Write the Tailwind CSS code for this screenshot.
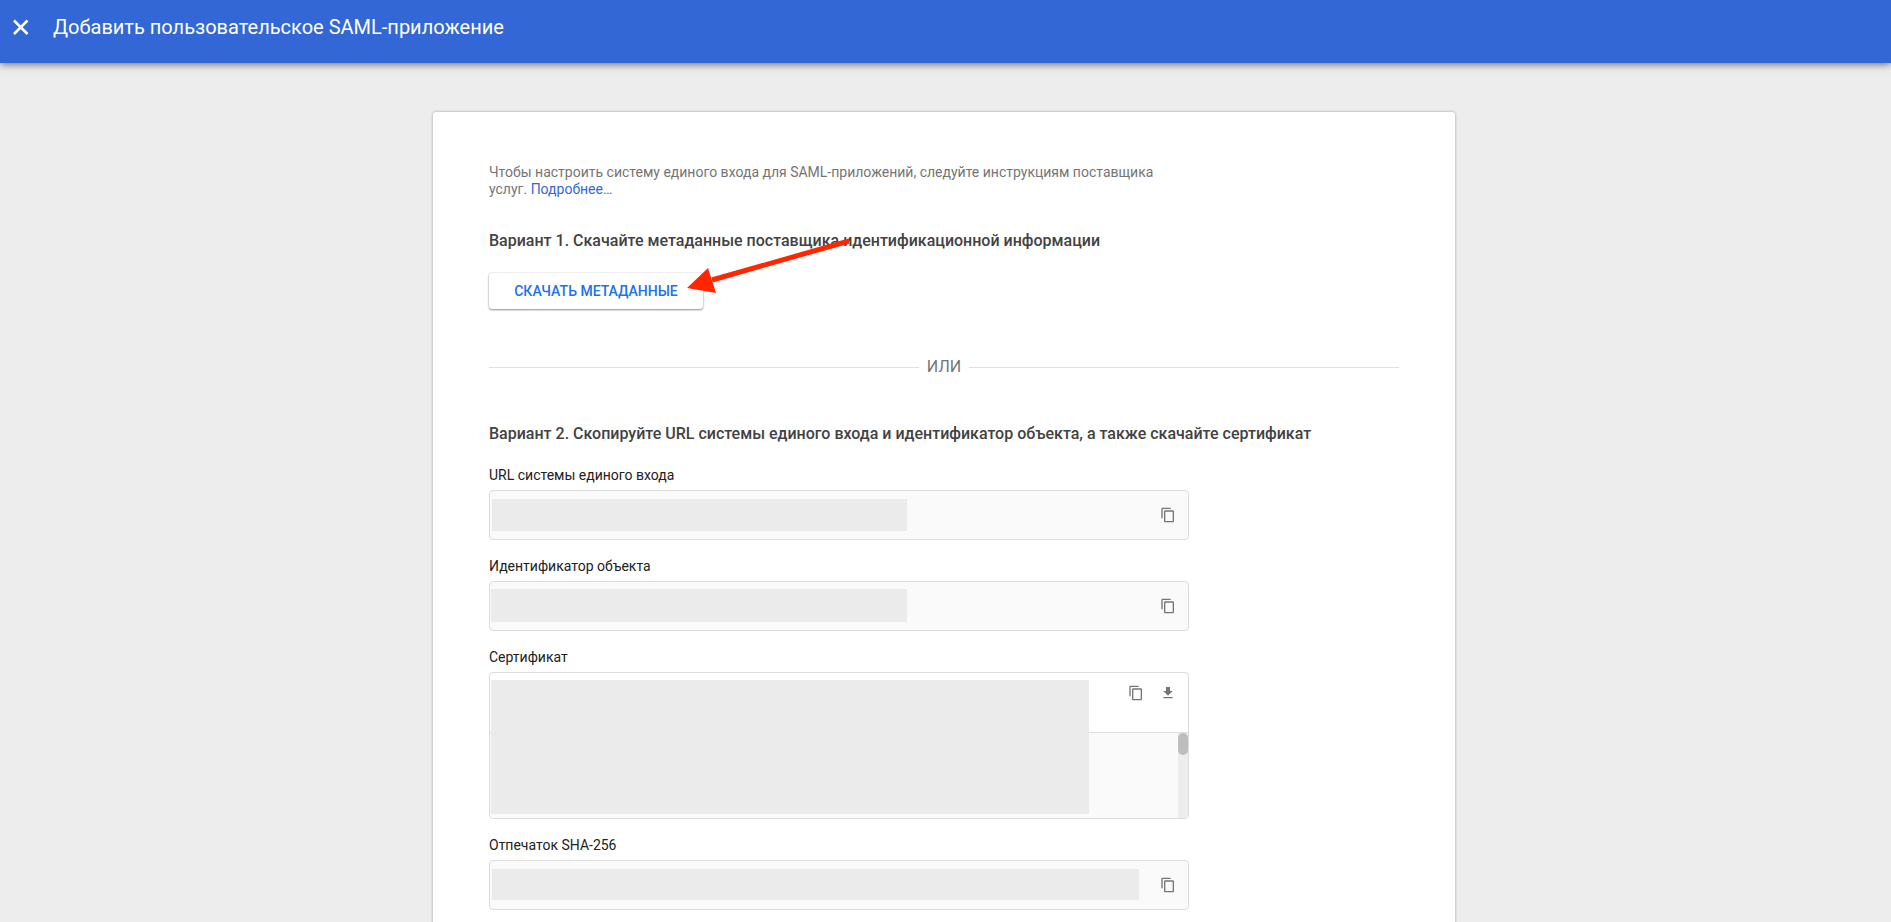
<!DOCTYPE html>
<html lang="ru">
<head>
<meta charset="utf-8">
<meta name="viewport" content="width=device-width, initial-scale=1">
<title>Добавить пользовательское SAML-приложение</title>
<script src="https://cdn.jsdelivr.net/npm/@tailwindcss/browser@4"></script>
</head>
<body class="flex h-screen flex-col overflow-hidden bg-[#ededed] font-[Roboto,sans-serif] text-sm text-[#212121]">
<svg class="hidden" aria-hidden="true">
  <symbol id="copy" viewBox="0 0 24 24"><path fill="currentColor" d="M16 1H4c-1.100 0-2 .9-2 2v14h2V3h12V1zm3 4H8c-1.100 0-2 .9-2 2v14c0 1.100.9 2 2 2h11c1.100 0 2-.9 2-2V7c0-1.100-.9-2-2-2zm0 16H8V7h11v14z"/></symbol>
  <symbol id="download" viewBox="0 0 24 24"><path fill="currentColor" d="M19 9h-4V3H9v6H5l7 7 7-7zM5 18v2h14v-2H5z"/></symbol>
</svg>

<header class="z-10 flex h-[63px] shrink-0 items-start bg-[#3367d6] pt-[13px] pl-3 text-white shadow-[0_1px_8px_rgba(0,0,0,0.6)]">
  <button type="button" aria-label="Закрыть" class="mt-[6px] size-[18px]">
    <svg viewBox="0 0 18 18" class="size-[18px]" fill="none" stroke="currentColor" stroke-width="2.500"><path d="M2 1.500 15.500 15M15.500 1.500 2 15"/></svg>
  </button>
  <h1 class="ml-[23px] text-xl leading-7">Добавить пользовательское SAML-приложение</h1>
</header>

<main class="flex-1 overflow-y-auto pt-[49px] pr-[19px] pl-4 [scrollbar-width:none]">
  <section class="mx-auto max-w-[1022px] rounded-[3px] bg-white px-14 pt-[52px] pb-14 shadow-[0_0_3px_rgba(0,0,0,0.35)]">
    <p class="max-w-[700px] leading-[17px] text-[#757575]">Чтобы настроить систему единого входа для SAML-приложений, следуйте инструкциям поставщика услуг. <a href="#" class="text-[#3367d6]">Подробнее…</a></p>

    <h2 class="mt-[31px] text-base leading-6 font-medium text-[#424242]">Вариант 1. Скачайте метаданные поставщика идентификационной информации</h2>

    <div class="relative mt-5 flex">
      <button type="button" class="h-9 min-w-[214px] rounded-[3px] bg-white px-6 font-medium text-[#1a73e8] shadow-[0_1px_2px_rgba(0,0,0,0.4),0_0_2px_rgba(0,0,0,0.2)]">СКАЧАТЬ МЕТАДАННЫЕ</button>
      <svg class="pointer-events-none absolute left-[197px] -top-9 h-[60px] w-[168px]" viewBox="0 0 168 60" aria-hidden="true">
        <path d="M26 43 163 4" stroke="#ff2600" stroke-width="5" fill="none"/>
        <path d="M1 51 22 31 30 56Z" fill="#ff2600"/>
      </svg>
    </div>

    <div class="mt-[46px] flex items-center gap-2 text-base leading-6 text-[#757575]">
      <hr class="flex-1 border-[#e0e0e0]">
      <span>ИЛИ</span>
      <hr class="flex-1 border-[#e0e0e0]">
    </div>

    <h2 class="mt-[43px] text-base leading-6 font-medium text-[#424242]">Вариант 2. Скопируйте URL системы единого входа и идентификатор объекта, а также скачайте сертификат</h2>

    <div class="mt-[21px] flex max-w-[700px] flex-col gap-[18px]">
      <div>
        <label for="sso" class="block leading-[17px]">URL системы единого входа</label>
        <div class="relative mt-[6px] flex h-[50px] items-center rounded border border-[#dcdcdc] bg-[#fafafa] pr-3">
          <input id="sso" type="text" readonly class="h-full min-w-0 flex-1 px-4 outline-none">
          <div class="absolute top-2 left-[2px] h-8 w-[415px] bg-[#ebebeb]"></div>
          <button type="button" aria-label="Копировать URL" class="size-4 text-[#757575]"><svg class="size-4"><use href="#copy"/></svg></button>
        </div>
      </div>
      <div>
        <label for="entity" class="block leading-[17px]">Идентификатор объекта</label>
        <div class="relative mt-[6px] flex h-[50px] items-center rounded border border-[#dcdcdc] bg-[#fafafa] pr-3">
          <input id="entity" type="text" readonly class="h-full min-w-0 flex-1 px-4 outline-none">
          <div class="absolute top-[7px] left-px h-[33px] w-[416px] bg-[#ebebeb]"></div>
          <button type="button" aria-label="Копировать идентификатор" class="size-4 text-[#757575]"><svg class="size-4"><use href="#copy"/></svg></button>
        </div>
      </div>
      <div>
        <label for="cert" class="block leading-[17px]">Сертификат</label>
        <div class="relative mt-[6px] flex h-[147px] flex-col overflow-hidden rounded border border-[#dcdcdc] bg-white">
          <div class="flex h-[60px] shrink-0 items-start justify-end gap-4 border-b border-[#dcdcdc] pt-3 pr-3 text-[#757575]">
            <button type="button" aria-label="Копировать сертификат" class="size-4"><svg class="size-4"><use href="#copy"/></svg></button>
            <button type="button" aria-label="Скачать сертификат" class="size-4"><svg class="size-4"><use href="#download"/></svg></button>
          </div>
          <div class="flex flex-1 bg-[#fafafa]">
            <textarea id="cert" readonly class="h-full min-w-0 flex-1 resize-none px-4 outline-none"></textarea>
            <div class="w-[10px] bg-[#ededed]"><div class="h-[22px] rounded-full bg-[#bdbdbd]"></div></div>
          </div>
          <div class="absolute top-[7px] left-px h-[134px] w-[598px] bg-[#ebebeb]"></div>
        </div>
      </div>
      <div>
        <label for="sha" class="block leading-[17px]">Отпечаток SHA-256</label>
        <div class="relative mt-[6px] flex h-[50px] items-center rounded border border-[#dcdcdc] bg-[#fafafa] pr-3">
          <input id="sha" type="text" readonly class="h-full min-w-0 flex-1 px-4 outline-none">
          <div class="absolute top-2 left-[2px] h-[31px] w-[647px] bg-[#ebebeb]"></div>
          <button type="button" aria-label="Копировать отпечаток" class="size-4 text-[#757575]"><svg class="size-4"><use href="#copy"/></svg></button>
        </div>
      </div>
    </div>
  </section>
</main>
</body>
</html>
